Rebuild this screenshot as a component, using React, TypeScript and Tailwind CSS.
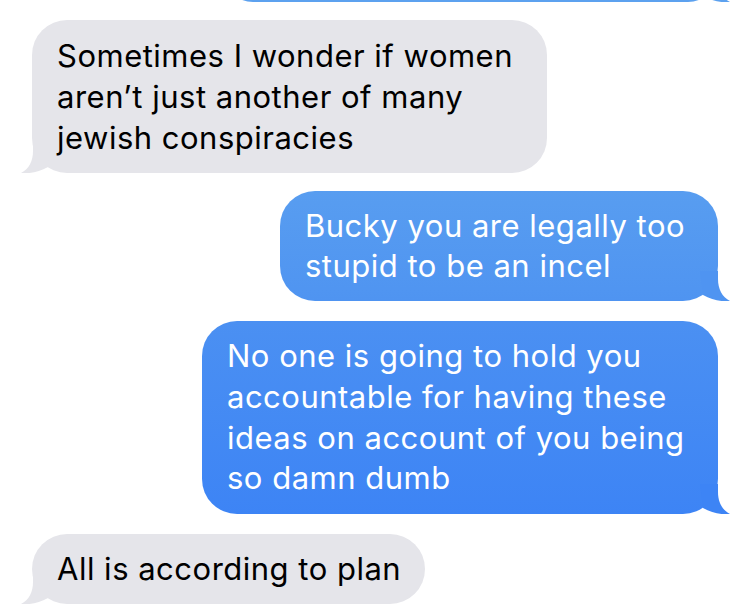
import React from "react";

type Side = "left" | "right";

// iMessage style tail, drawn over the bottom corner of the bubble
const Tail = ({ side, color }: { side: Side; color: string }) => (
  <svg
    width="30"
    height="30"
    viewBox="0 0 30 30"
    className={
      side === "right"
        ? "absolute -right-[12px] bottom-0"
        : "absolute -left-[11px] bottom-0 -scale-x-100"
    }
  >
    <path d="M18 0 L18 8 C18 18 22 26 30 30 C22 31 12 29 3 24 L0 0 Z" fill={color} />
  </svg>
);

const Bubble = ({
  side,
  lines,
  width,
  leading,
  className,
  tailColor,
}: {
  side: Side;
  lines: string[];
  width: string;
  leading: string;
  className: string;
  tailColor: string;
}) => (
  <div className={side === "right" ? "flex justify-end" : "flex justify-start"}>
    <div
      className={`relative rounded-[35px] pl-[25px] py-[15px] text-[31px] tracking-[0.5px] ${width} ${leading} ${className}`}
    >
      {lines.map((l) => (
        <div key={l} className="relative whitespace-nowrap">
          {l}
        </div>
      ))}
      <Tail side={side} color={tailColor} />
    </div>
  </div>
);

export default function App() {
  return (
    <div
      className="h-[614px] w-[750px] overflow-hidden bg-white px-[32px]"
      style={{ fontFamily: "Inter, 'Noto Sans', sans-serif" }}
    >
      {/* previous message, cut off at the top */}
      <div className="flex justify-end -mt-[58px]">
        <div className="relative h-[60px] w-[495px] rounded-[35px] bg-[#5ca1ef]">
          <Tail side="right" color="#5ca1ef" />
        </div>
      </div>

      <div className="mt-[18px]">
        <Bubble
          side="left"
          width="w-[515px]"
          leading="leading-[41px]"
          className="bg-[#e5e5ea] text-black"
          tailColor="#e5e5ea"
          lines={[
            "Sometimes I wonder if women",
            "aren\u2019t just another of many",
            "jewish conspiracies",
          ]}
        />
      </div>

      <div className="mt-[18px]">
        <Bubble
          side="right"
          width="w-[438px]"
          leading="leading-[40px]"
          className="bg-gradient-to-b from-[#589df0] to-[#4f94f1] text-white"
          tailColor="#4f94f1"
          lines={["Bucky you are legally too", "stupid to be an incel"]}
        />
      </div>

      <div className="mt-[20px]">
        <Bubble
          side="right"
          width="w-[516px]"
          leading="leading-[40.75px]"
          className="bg-gradient-to-b from-[#4b90f2] to-[#3d84f5] text-white"
          tailColor="#3d84f5"
          lines={[
            "No one is going to hold you",
            "accountable for having these",
            "ideas on account of you being",
            "so damn dumb",
          ]}
        />
      </div>

      <div className="mt-[20px]">
        <Bubble
          side="left"
          width="w-[393px]"
          leading="leading-[40px]"
          className="bg-[#e5e5ea] text-black"
          tailColor="#e5e5ea"
          lines={["All is according to plan"]}
        />
      </div>
    </div>
  );
}
